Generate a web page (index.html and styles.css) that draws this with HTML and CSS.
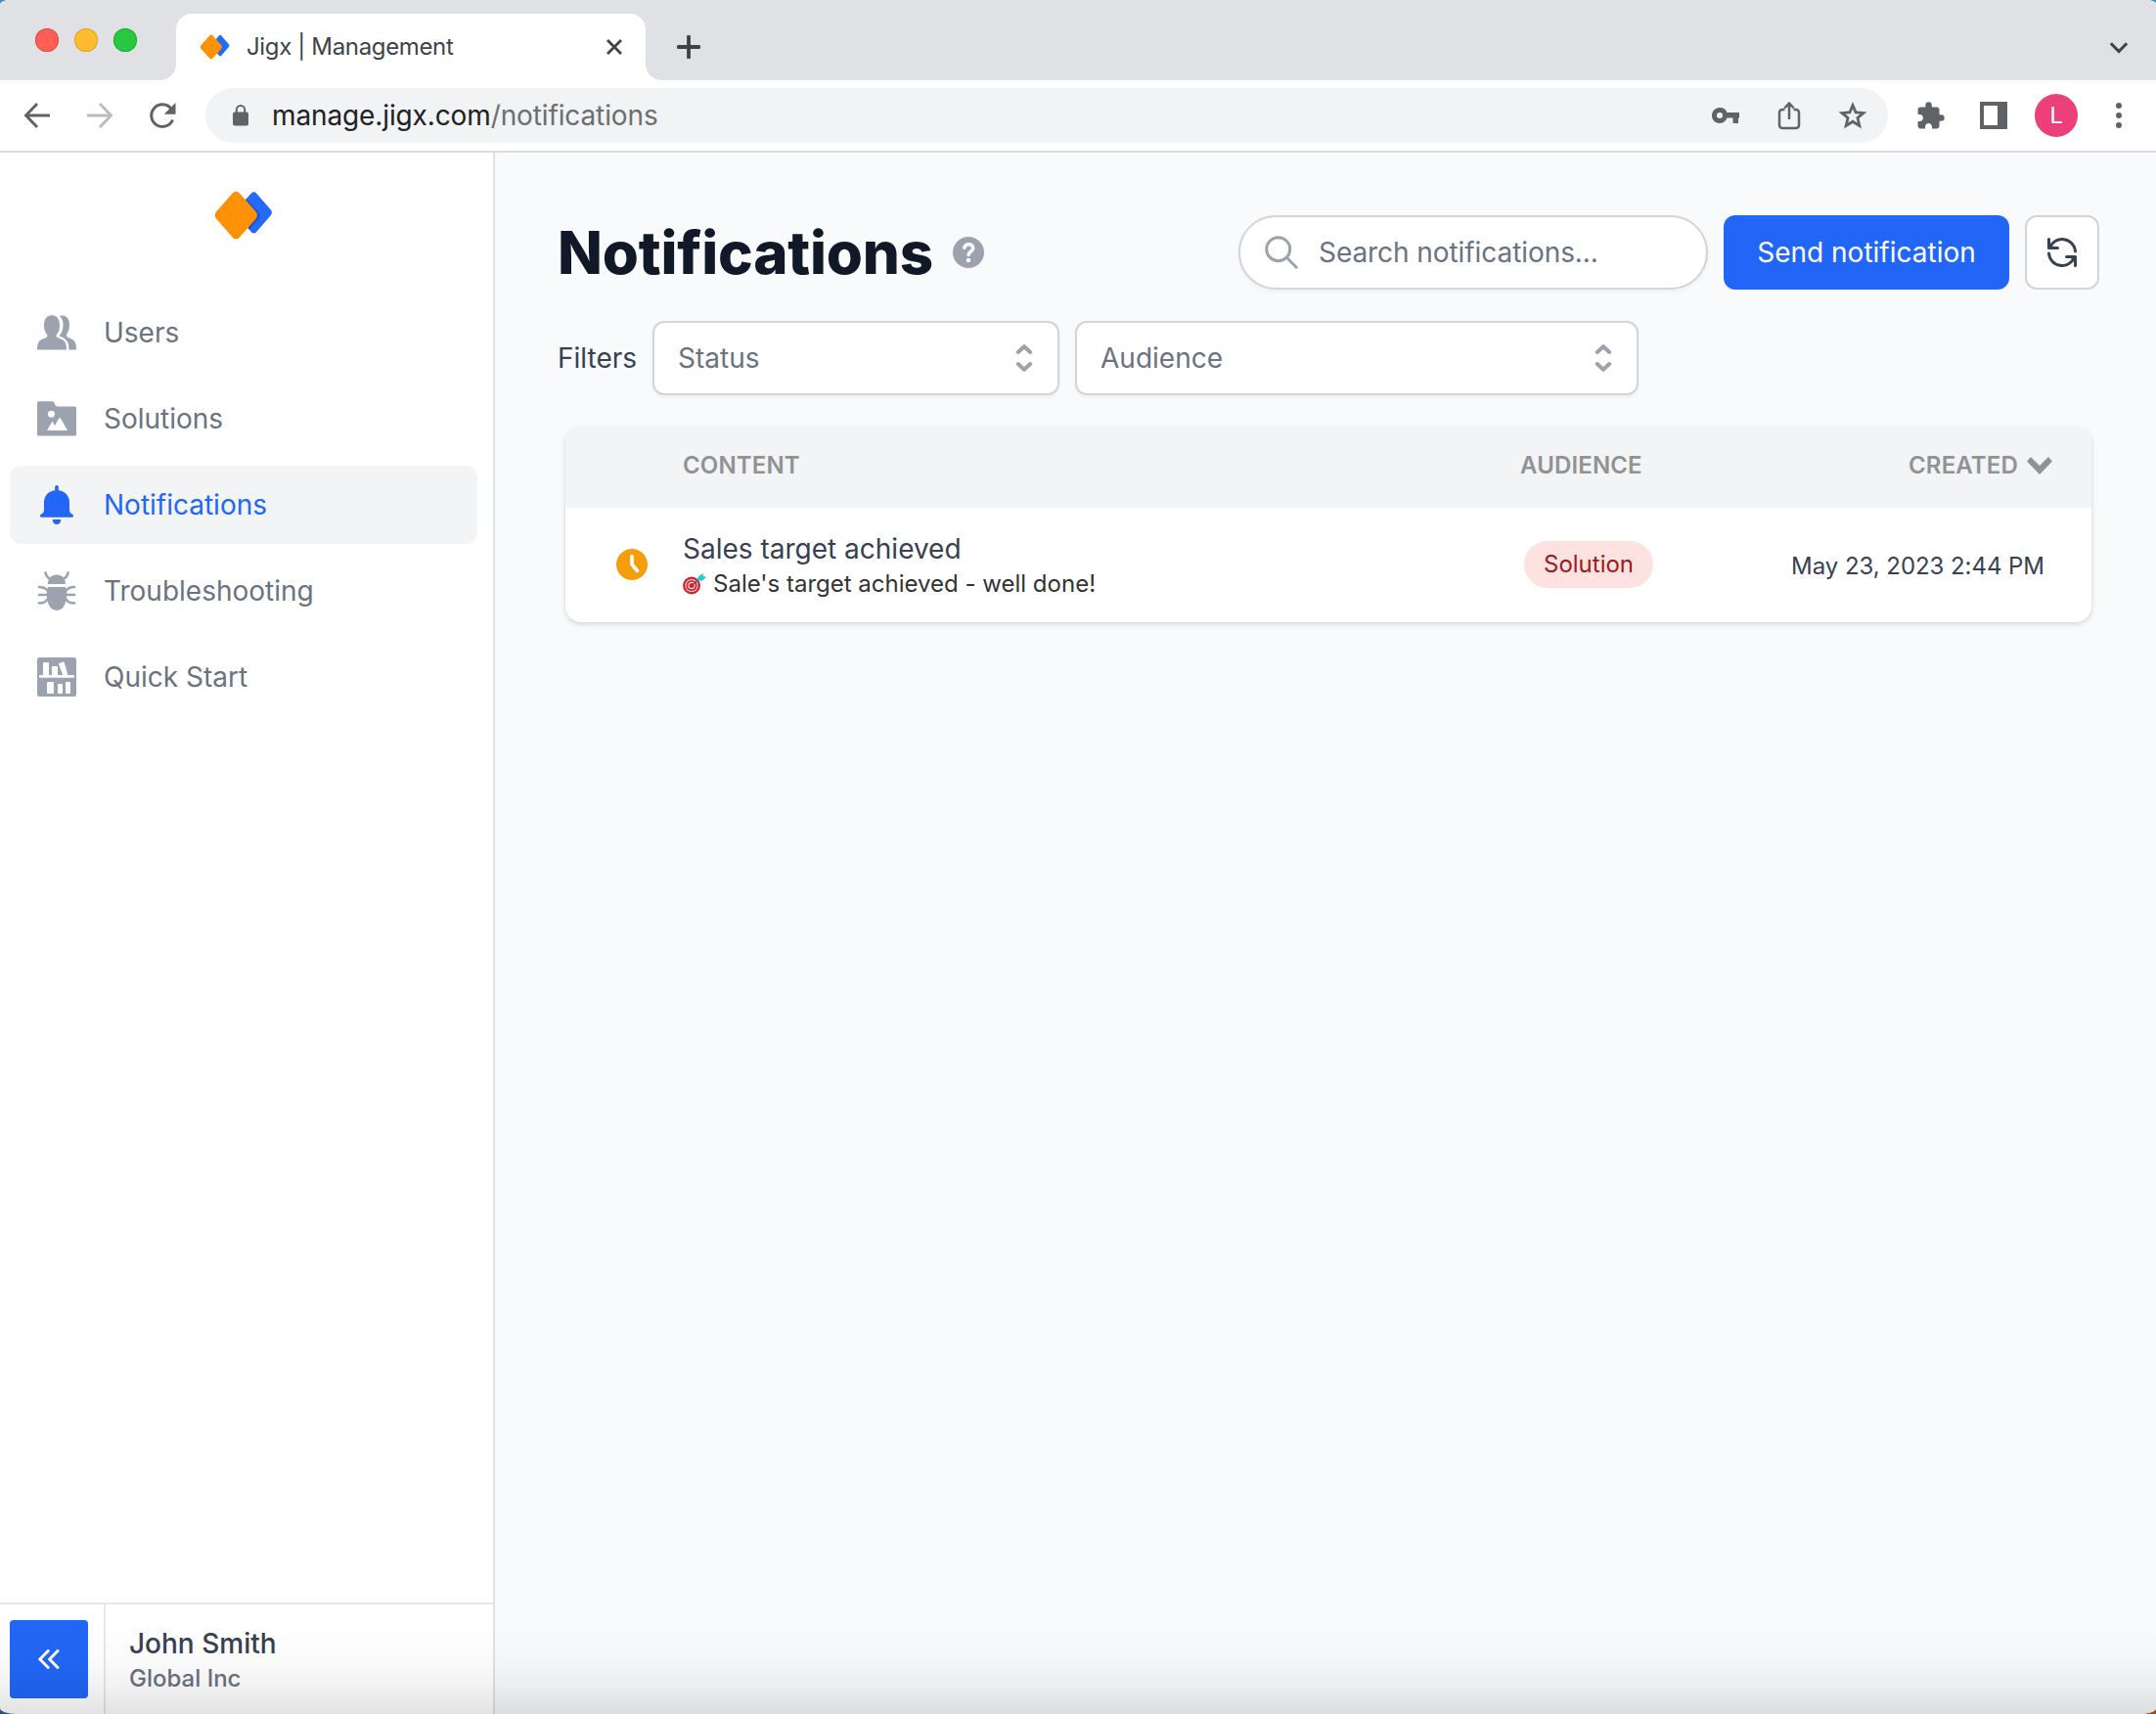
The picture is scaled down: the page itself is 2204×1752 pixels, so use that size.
FILE: index.html
```html
<!DOCTYPE html>
<html lang="en">
<head>
<meta charset="utf-8">
<title>Jigx | Management</title>
<link rel="stylesheet" href="styles.css">
</head>
<body>
<div class="window">
  <header class="chrome">
    <div class="tabstrip">
      <div class="lights"><span class="light red"></span><span class="light yellow"></span><span class="light green"></span></div>
      <div class="tab">
        <svg class="favicon" width="30" height="26" viewBox="220 195 59 50"><rect x="244" y="202" width="31" height="31" rx="4" transform="translate(259.5 217.3) scale(.9 1.04) rotate(45) translate(-259.5 -217.5)" fill="#246bfd"/><rect x="223.500" y="202.500" width="35" height="35" rx="5" transform="translate(241.3 220) scale(.95 1.07) rotate(45) translate(-241 -220)" fill="#ff9104"/></svg>
        <span class="tab-title">Jigx | Management</span>
        <svg class="tab-close" width="18" height="18" viewBox="0 0 18 18"><path d="M2 2l14 14M16 2L2 16" stroke="#3f4347" stroke-width="2.800"/></svg>
      </div>
      <svg class="newtab" width="24" height="24" viewBox="0 0 24 24"><path d="M12 1.500v21M1.500 12h21" stroke="#3f4347" stroke-width="3.800" stroke-linecap="round"/></svg>
      <svg class="tabmenu" width="20" height="14" viewBox="0 0 20 14"><path d="M1.800 2.200L10 10.500l8.200-8.300" fill="none" stroke="#3f4347" stroke-width="3"/></svg>
    </div>
    <div class="toolbar">
      <svg class="nav-btn" width="28" height="28" viewBox="0 0 28 28"><path d="M27 14H3M14 2L2.500 14 14 26" fill="none" stroke="#5f6368" stroke-width="2.900"/></svg>
      <svg class="nav-btn" width="28" height="28" viewBox="0 0 28 28"><path d="M1 14h24M14 2l11.500 12L14 26" fill="none" stroke="#babcbe" stroke-width="2.900"/></svg>
      <svg class="nav-btn" width="28" height="28" viewBox="0 0 28 28"><path d="M24.500 18.500A11.300 11.300 0 1 1 23 7.200" fill="none" stroke="#5f6368" stroke-width="3"/><path d="M27.500 1v11.800H15.700z" fill="#5f6368"/></svg>
      <div class="omnibox">
        <svg class="lock" width="16" height="22" viewBox="0 0 16 22"><rect y="7.500" width="16" height="14" rx="2" fill="#5f6368"/><path d="M3.800 8V5.200a4.200 4.200 0 0 1 8.400 0V8" fill="none" stroke="#5f6368" stroke-width="2"/></svg>
        <span class="url">manage.jigx.com<span class="path">/notifications</span></span>
        <span class="omni-actions">
          <svg width="28" height="18" viewBox="0 0 28 18"><path fill-rule="evenodd" d="M8 1a8 8 0 1 0 7.500 10.500H21.500V17H27v-5.500h1V6H15.500A8 8 0 0 0 8 1zm0 5a3 3 0 1 1 0 6 3 3 0 0 1 0-6z" fill="#5f6368"/></svg>
          <svg width="24" height="30" viewBox="0 0 24 30"><path d="M7.500 9H5a3 3 0 0 0-3 3v13a3 3 0 0 0 3 3h14a3 3 0 0 0 3-3V12a3 3 0 0 0-3-3h-2.500M12 19V3M7.300 7.500L12 2.600l4.700 4.900" fill="none" stroke="#5f6368" stroke-width="2.500"/></svg>
          <svg class="star" width="30" height="28" viewBox="0 0 30 28"><path fill-rule="evenodd" d="M15 0l4 9.600 10.500.8-8 6.700L24 27.500l-9-5.600-9 5.600 2.500-10.400-8-6.700L11 9.600zM15 7.200l-2.100 5-5.400.4 4.100 3.500-1.300 5.300 4.700-2.900 4.700 2.900-1.300-5.300 4.100-3.500-5.400-.4z" fill="#5f6368"/></svg>
        </span>
      </div>
      <svg class="puzzle" width="31" height="31" viewBox="0 0 24 24"><path d="M20.500 11H19V7c0-1.100-.9-2-2-2h-4V3.500a2.500 2.500 0 0 0-5 0V5H4c-1.100 0-1.990.9-1.990 2v3.800H3.500c1.490 0 2.700 1.210 2.700 2.700s-1.210 2.700-2.700 2.700H2V20c0 1.100.9 2 2 2h3.800v-1.500c0-1.490 1.210-2.700 2.700-2.700s2.700 1.210 2.700 2.700V22H17c1.100 0 2-.9 2-2v-4h1.500a2.500 2.500 0 0 0 0-5z" fill="#5f6368"/></svg>
      <svg class="panel" width="28" height="28" viewBox="0 0 28 28"><path fill-rule="evenodd" d="M0 0h28v28H0zM4 4v20h14V4z" fill="#5f6368"/></svg>
      <span class="avatar">L</span>
      <svg class="dots" width="6" height="26" viewBox="0 0 6 26"><g fill="#5f6368"><circle cx="3" cy="3" r="3"/><circle cx="3" cy="13" r="3"/><circle cx="3" cy="23" r="3"/></g></svg>
    </div>
  </header>

  <div class="app">
    <aside class="sidebar">
      <svg class="logo" width="59" height="50" viewBox="220 195 59 50">
        <defs><clipPath id="blue"><rect x="244" y="202" width="31" height="31" rx="4" transform="translate(259.5 217.3) scale(.9 1.04) rotate(45) translate(-259.5 -217.5)"/></clipPath></defs>
        <rect x="244" y="202" width="31" height="31" rx="4" transform="translate(259.5 217.3) scale(.9 1.04) rotate(45) translate(-259.5 -217.5)" fill="#246bfd"/>
        <g clip-path="url(#blue)"><rect x="223.500" y="202.500" width="35" height="35" rx="5" transform="translate(243.8 220.5) scale(.97 1.07) rotate(45) translate(-241 -220)" fill="#1f57c8"/></g>
        <rect x="223.500" y="202.500" width="35" height="35" rx="5" transform="translate(241.3 220) scale(.95 1.07) rotate(45) translate(-241 -220)" fill="#ff9104"/>
      </svg>
      <nav class="menu">
        <a class="item"><svg width="40" height="40" viewBox="0 0 40 40" fill="currentColor"><path d="M0 37.500c0-8 2-10 8.500-12 2.300-.8 2.300-2.500 1.500-3.800-2-2.400-3-5-3-9C7 6 10 2.300 15 2.300s8 3.700 8 10.400c0 4-1 6.600-3 9-.8 1.300-.8 3 1.500 3.800 6.500 2 8.500 4 8.500 12z"/><path d="M23 3c6-2 10 2.500 10 9 0 4-.7 6.500-2.700 9.200-.8 1.500-.3 3.300 2 4 6 2 7.700 4.300 7.700 12.300h-7.500c0-8-2.500-11.500-10-14 3-4 4-6.500 4-11.500 0-4-1-6.500-3.500-9z"/></svg><span>Users</span></a>
        <a class="item"><svg width="40" height="40" viewBox="0 0 40 40"><path d="M1.500 2.300h14c1.500 0 2.300 1.800 3 3.500.4 1 1 1.700 2.300 1.700h17.700A1.500 1.500 0 0 1 40 9v27a1.500 1.500 0 0 1-1.500 1.500h-37A1.500 1.500 0 0 1 0 36V3.800a1.500 1.500 0 0 1 1.500-1.500z" fill="currentColor"/><circle cx="14.500" cy="15.200" r="3.500" fill="#fff"/><path d="M10 32l5-8.500c.6-.8 1-.5 1.300.2l1.700 3.500 4-7.300c.7-1.200 1.500-1.200 2.200 0L31 32z" fill="#fff"/></svg><span>Solutions</span></a>
        <a class="item active"><svg width="40" height="40" viewBox="0 0 40 40" fill="currentColor"><path d="M20 0c1.100 0 1.800.7 1.800 1.800v3.400C28.500 6 33 11 33 17.500V25c0 2 .8 3.500 2.300 4.300.9.300 1.700.8 1.700 1.900 0 1-.6 1.600-1.700 1.600H4.700c-1.100 0-1.700-.6-1.700-1.600 0-1.100.8-1.600 1.700-1.900C6.200 28.500 7 27 7 25v-7.500C7 11 11.500 6 18.200 5.200V1.800C18.200.7 18.900 0 20 0z"/><path d="M15.800 35h8.400c0 3-1.600 5-4.200 5s-4.200-2-4.200-5z"/></svg><span>Notifications</span></a>
        <a class="item"><svg width="40" height="40" viewBox="0 0 40 40"><path d="M11 13c0-6 3.500-9.500 9-9.500s9 3.500 9 9.500zM11 16h18l1.300 6c0 8-2.300 18-10.300 18S9.700 30 9.700 22z" fill="currentColor"/><path d="M8.500 1.500c1 4 2.500 5.500 5 6M31.500 1.500c-1 4-2.500 5.500-5 6M2 16c4 0 6.500 1 9 4M38 16c-4 0-6.500 1-9 4M2 24h8M38 24h-8M2 32.500c4 0 7-1 8.500-4M38 32.500c-4 0-7-1-8.500-4" fill="none" stroke="currentColor" stroke-width="2.700" stroke-linecap="round"/></svg><span>Troubleshooting</span></a>
        <a class="item"><svg width="40" height="40" viewBox="0 0 40 40"><rect width="40" height="40" rx="2.500" fill="currentColor"/><g fill="#fff"><rect x="2" y="18" width="36" height="2.700" rx="1"/><rect x="6" y="5" width="6" height="14" rx="1"/><rect x="15" y="9" width="6" height="10" rx="1"/><path d="M22.500 6l4-1.500c.6-.2 1 .1 1.200.6L31.500 18.500h-5L22 7c-.2-.5 0-.8.5-1z"/><rect x="10" y="25" width="7" height="12" rx="1"/><rect x="21" y="27" width="5" height="10" rx="1"/><rect x="29" y="25" width="5" height="12" rx="1"/></g></svg><span>Quick Start</span></a>
      </nav>
      <footer class="account">
        <div class="collapse-cell"><button class="collapse"><svg width="22" height="20" viewBox="0 0 22 20"><path d="M10.200 1.500L1.800 10l8.400 8.500M20 1.500L11.600 10l8.400 8.500" fill="none" stroke="#fff" stroke-width="3" stroke-linecap="round" stroke-linejoin="round"/></svg></button></div>
        <div class="who"><span class="name">John Smith</span><span class="org">Global Inc</span></div>
      </footer>
    </aside>

    <main class="main">
      <div class="heading">
        <h1>Notifications</h1>
        <svg class="help" width="32" height="32" viewBox="0 0 32 32"><circle cx="16" cy="16" r="16" fill="#9ca3af"/><path d="M11.800 11.300c.6-2.300 2.200-3.500 4.500-3.500 2.600 0 4.400 1.500 4.400 3.800 0 3.700-4.600 3.500-4.600 6.800" fill="none" stroke="#f9fafc" stroke-width="3.600" stroke-linecap="round"/><circle cx="16" cy="24" r="2.300" fill="#f9fafc"/></svg>
        <div class="search"><svg width="34" height="34" viewBox="0 0 34 34"><circle cx="13.700" cy="13.700" r="12" fill="none" stroke="#9ca3af" stroke-width="3"/><path d="M22.500 22.500l9.700 9.700" stroke="#9ca3af" stroke-width="3" stroke-linecap="round"/></svg><span>Search notifications...</span></div>
        <button class="send">Send notification</button>
        <button class="refresh"><svg width="32" height="32" viewBox="0 0 32 32"><path d="M2.500 2.500v9h9M29.500 29.500v-9h-9M29.500 15A13.500 13.500 0 0 0 3.500 11M2.500 17a13.500 13.500 0 0 0 26 4" fill="none" stroke="#374151" stroke-width="3" stroke-linecap="round" stroke-linejoin="round"/><path d="M1.500 4.500l8 8h-7zM30.500 27.500l-8-8h7z" fill="#374151"/></svg></button>
      </div>
      <div class="filters">
        <span class="filters-label">Filters</span>
        <div class="select status"><span>Status</span><svg width="20" height="28" viewBox="0 0 20 28"><path d="M3.800 8l6.200-5.800L16.200 8M3.800 20l6.200 5.800 6.200-5.800" fill="none" stroke="#9ca3af" stroke-width="4" stroke-linecap="round" stroke-linejoin="round"/></svg></div>
        <div class="select audience"><span>Audience</span><svg width="20" height="28" viewBox="0 0 20 28"><path d="M3.800 8l6.200-5.800L16.200 8M3.800 20l6.200 5.800 6.200-5.800" fill="none" stroke="#9ca3af" stroke-width="4" stroke-linecap="round" stroke-linejoin="round"/></svg></div>
      </div>
      <section class="table">
        <div class="row head"><span></span><span>CONTENT</span><span>AUDIENCE</span><span class="created">CREATED<svg width="26" height="18" viewBox="0 0 26 18"><path d="M0 4.500L4 0l9 9 9-9 4 4.500L13 18z" fill="#919294"/></svg></span></div>
        <div class="row body">
          <svg class="clock" width="32" height="32" viewBox="0 0 32 32"><circle cx="16" cy="16" r="16" fill="#f59e0b"/><path d="M16 7.500V16l5.500 6.500" fill="none" stroke="#fff" stroke-width="3.600" stroke-linecap="round" stroke-linejoin="round"/></svg>
          <div class="content">
            <div class="title">Sales target achieved</div>
            <div class="message"><svg width="24" height="22" viewBox="0 0 24 22"><circle cx="9" cy="12.500" r="9" fill="#d3232e"/><circle cx="9" cy="12.500" r="6.600" fill="#f3dfe0"/><circle cx="9" cy="12.500" r="5.600" fill="#d3232e"/><circle cx="9" cy="12.500" r="3.700" fill="#f3dfe0"/><circle cx="9" cy="12.500" r="2.500" fill="#d3232e"/><path d="M9 12.500l7-5.500" stroke="#5b4a4d" stroke-width="1.200"/><path d="M13.500 8.300L20 3" stroke="#1c8fa0" stroke-width="2"/><path d="M15 6.800L16 3.200 20.500 0l.3 2.700L24 4l-4.500 4z" fill="#2cc6d3"/></svg><span>Sale's target achieved - well done!</span></div>
          </div>
          <div class="audience-cell"><span class="pill">Solution</span></div>
          <div class="date">May 23, 2023 2:44 PM</div>
        </div>
      </section>
    </main>
  </div>
  <div class="shade"></div>
</div>
</body>
</html>
```
FILE: styles.css
```css
* { box-sizing: border-box; }
body { margin: 0; background: linear-gradient(90deg, transparent 50%, #a04a1c 50%) 0 100% / 100% 50% no-repeat, linear-gradient(#3f8fc0, #26557c); font-family: Inter, "Liberation Sans", sans-serif; }
svg { display: block; flex: none; }
button { font: inherit; margin: 0; padding: 0; border: 0; }
.window { position: relative; width: 2204px; height: 1752px; border-radius: 10px 10px 17px 17px / 5px 4px 6px 6px; overflow: hidden; background: #fff; display: flex; flex-direction: column; }

.tabstrip { height: 82px; background: #dfe1e5; display: flex; align-items: flex-end; padding-left: 36px; }
.lights { display: flex; gap: 16px; width: 144px; height: 53px; }
.light { width: 24px; height: 24px; border-radius: 50%; }
.red { background: #ff5f57; box-shadow: inset 0 0 0 1px #e24b41; }
.yellow { background: #febc2e; box-shadow: inset 0 0 0 1px #e1a325; }
.green { background: #28c840; box-shadow: inset 0 0 0 1px #1fad2f; }
.tab { position: relative; width: 480px; height: 68px; background: #fff; border-radius: 16px 16px 0 0; display: flex; align-items: center; padding: 0 23px 0 25px; }
.tab::before, .tab::after { content: ""; position: absolute; bottom: 0; width: 16px; height: 16px; }
.tab::before { left: -16px; background: radial-gradient(circle at 0 0, transparent 15.500px, #fff 16px); }
.tab::after { right: -16px; background: radial-gradient(circle at 100% 0, transparent 15.500px, #fff 16px); }
.tab-title { margin-left: 17px; flex: 1; font-size: 24px; line-height: 34px; letter-spacing: -.35px; color: #3f4347; }
.newtab { margin: 0 auto 22px 32px; }
.tabmenu { margin: 0 28px 26px 0; }

.toolbar { height: 74px; border-bottom: 2px solid #dadce0; display: flex; align-items: center; padding-left: 24px; }
.nav-btn { margin-right: 36px; }
.nav-btn:nth-child(3) { margin-right: 30px; }
.omnibox { width: 1720px; height: 56px; border-radius: 28px; background: #f1f3f4; display: flex; align-items: center; padding: 0 21px 0 28px; }
.url { margin-left: 24px; flex: 1; font-size: 28px; letter-spacing: -.12px; color: #202124; }
.path { color: #6b6e72; }
.omni-actions { display: flex; align-items: center; gap: 38px; }
.omni-actions svg:first-child { margin-right: 1px; }
.puzzle { margin-left: 28px; }
.panel { margin-left: 35px; }
.avatar { width: 44px; height: 44px; margin-left: 28px; border-radius: 50%; background: #ec407a; color: #fff; font-family: Roboto, sans-serif; font-size: 24px; line-height: 44px; text-align: center; }
.dots { margin-left: 39px; }

.app { flex: 1; display: flex; min-height: 0; }
.sidebar { width: 506px; border-right: 2px solid #e1e2e4; display: flex; flex-direction: column; }
.logo { margin: 39px 0 0 220px; }
.menu { margin: 55px 16px 0 10px; display: flex; flex-direction: column; gap: 8px; flex: 1; }
.item { height: 80px; border-radius: 12px; display: flex; align-items: center; gap: 28px; padding-left: 28px; color: #9ca3af; font-size: 28px; }
.item span { color: #6b7280; }
.active { background: #f3f4f6; color: #2166f6; }
.active span { color: #2166f6; }
.account { height: 114px; border-top: 2px solid #e5e7eb; display: flex; }
.collapse-cell { width: 108px; border-right: 2px solid #e5e7eb; padding: 16px 0 0 10px; }
.collapse { width: 80px; height: 80px; border-radius: 4px; background: #2166f6; display: flex; align-items: center; justify-content: center; }
.who { display: flex; flex-direction: column; padding: 20px 0 0 24px; font-weight: 500; }
.name { font-size: 28px; line-height: 40px; color: #374151; }
.org { font-size: 24px; line-height: 32px; color: #6b7280; }

.main { flex: 1; background: #f9fafc; padding: 64px 58px 0 64px; }
.heading { display: flex; align-items: center; height: 76px; }
h1 { margin: 0; font-size: 60px; line-height: 76px; font-weight: 800; letter-spacing: -.2px; color: #111827; }
.help { margin-left: 20px; }
.search { margin-left: auto; width: 480px; height: 76px; border: 2px solid #d1d5db; border-radius: 38px; background: #fff; box-shadow: 0 2px 4px rgba(0,0,0,.05); display: flex; align-items: center; gap: 21px; padding-left: 25px; font-size: 28px; letter-spacing: -.07px; color: #6b7280; }
.send { width: 292px; height: 76px; margin: 0 16px; border-radius: 12px; background: #2166f6; color: #fff; font-size: 28px; }
.refresh { width: 76px; height: 76px; border: 2px solid #d1d5db; border-radius: 12px; background: #fff; display: flex; align-items: center; justify-content: center; }
.filters { display: flex; align-items: center; margin-top: 32px; font-size: 28px; }
.filters-label { width: 97px; color: #374151; }
.select { height: 76px; border: 2px solid #d1d5db; border-radius: 12px; background: #fff; box-shadow: 0 2px 4px rgba(0,0,0,.05); display: flex; align-items: center; justify-content: space-between; padding: 0 24px; color: #6b7280; }
.status { width: 416px; }
.audience { width: 576px; margin-left: 16px; }
.table { margin: 32px 8px 0; border-radius: 16px; background: #fff; box-shadow: 0 2px 6px rgba(0,0,0,.1), 0 2px 4px rgba(0,0,0,.06); overflow: hidden; }
.row { display: grid; grid-template-columns: 120px 856px 1fr auto; align-items: center; }
.head { height: 83px; background: #f3f4f6; padding-right: 40px; padding-bottom: 4px; font-size: 24px; font-weight: 600; letter-spacing: .15px; color: #919294; }
.created { display: flex; align-items: center; gap: 9px; }
.body { height: 117px; padding: 0 48px 1px 0; }
.clock { margin-left: 52px; }
.content { padding-bottom: 1px; }
.title { font-size: 28px; line-height: 40px; color: #374151; }
.message { display: flex; align-items: center; gap: 7px; font-size: 24px; line-height: 32px; color: #333; }
.pill { display: block; width: fit-content; margin-left: 4px; height: 48px; padding: 0 20px; border-radius: 24px; background: #fee2e2; color: #991b1b; font-size: 24px; line-height: 48px; }
.date { padding-top: 2px; font-size: 24px; letter-spacing: -.05px; color: #374151; }
.shade { position: absolute; left: 0; right: 0; bottom: 0; height: 92px; background: linear-gradient(rgba(0,0,0,0), rgba(0,0,0,.018) 42%, rgba(0,0,0,.055) 70%, rgba(0,0,0,.115)); }
```
